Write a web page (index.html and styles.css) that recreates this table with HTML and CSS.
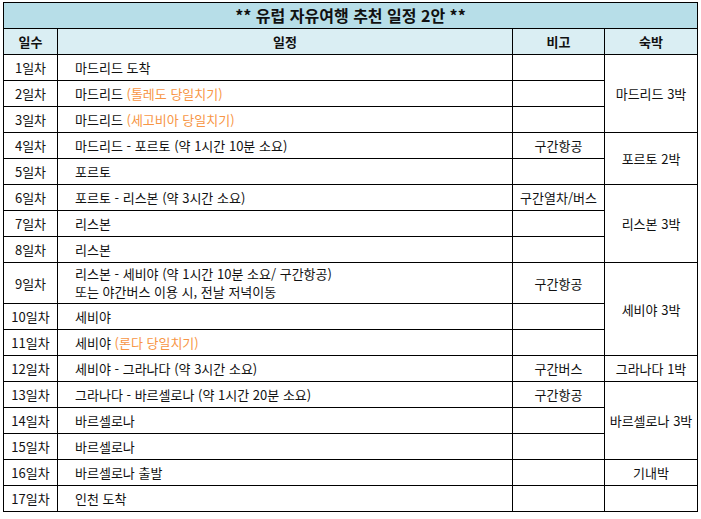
FILE: index.html
```html
<!DOCTYPE html>
<html lang="ko">
<head>
<meta charset="utf-8">
<link rel="stylesheet" href="styles.css">
</head>
<body>
<table class="plan">
  <colgroup>
    <col class="c-day">
    <col class="c-plan">
    <col class="c-note">
    <col class="c-stay">
  </colgroup>
  <tr class="r-title"><td colspan="4" class="title">** 유럽 자유여행 추천 일정 2안 **</td></tr>
  <tr class="r-head">
    <th>일수</th><th>일정</th><th>비고</th><th>숙박</th>
  </tr>
  <tr><td class="day">1일차</td><td class="sch">마드리드 도착</td><td class="note"></td><td class="stay" rowspan="3">마드리드 3박</td></tr>
  <tr><td class="day">2일차</td><td class="sch">마드리드 <span class="opt">(톨레도 당일치기)</span></td><td class="note"></td></tr>
  <tr><td class="day">3일차</td><td class="sch">마드리드 <span class="opt">(세고비아 당일치기)</span></td><td class="note"></td></tr>
  <tr><td class="day">4일차</td><td class="sch">마드리드 - 포르토 (약 1시간 10분 소요)</td><td class="note">구간항공</td><td class="stay" rowspan="2">포르토 2박</td></tr>
  <tr><td class="day">5일차</td><td class="sch">포르토</td><td class="note"></td></tr>
  <tr><td class="day">6일차</td><td class="sch">포르토 - 리스본 (약 3시간 소요)</td><td class="note">구간열차/버스</td><td class="stay" rowspan="3">리스본 3박</td></tr>
  <tr><td class="day">7일차</td><td class="sch">리스본</td><td class="note"></td></tr>
  <tr><td class="day">8일차</td><td class="sch">리스본</td><td class="note"></td></tr>
  <tr class="r-double"><td class="day">9일차</td><td class="sch"><div class="ln">리스본 - 세비야 (약 1시간 10분 소요/ 구간항공)</div><div class="ln">또는 야간버스 이용 시, 전날 저녁이동</div></td><td class="note">구간항공</td><td class="stay" rowspan="3">세비야 3박</td></tr>
  <tr><td class="day">10일차</td><td class="sch">세비야</td><td class="note"></td></tr>
  <tr><td class="day">11일차</td><td class="sch">세비야 <span class="opt">(론다 당일치기)</span></td><td class="note"></td></tr>
  <tr><td class="day">12일차</td><td class="sch">세비야 - 그라나다 (약 3시간 소요)</td><td class="note">구간버스</td><td class="stay">그라나다 1박</td></tr>
  <tr><td class="day">13일차</td><td class="sch">그라나다 - 바르셀로나 (약 1시간 20분 소요)</td><td class="note">구간항공</td><td class="stay" rowspan="3">바르셀로나 3박</td></tr>
  <tr><td class="day">14일차</td><td class="sch">바르셀로나</td><td class="note"></td></tr>
  <tr><td class="day">15일차</td><td class="sch">바르셀로나</td><td class="note"></td></tr>
  <tr><td class="day">16일차</td><td class="sch">바르셀로나 출발</td><td class="note"></td><td class="stay">기내박</td></tr>
  <tr><td class="day">17일차</td><td class="sch">인천 도착</td><td class="note"></td><td class="stay"></td></tr>
</table>
</body>
</html>
```
FILE: styles.css
```css
html, body {
  margin: 0;
  padding: 0;
  background: #ffffff;
}
body {
  padding: 2px 0 0 3px;
  font-family: "Noto Sans CJK KR", "Noto Sans", sans-serif;
  font-size: 13px;
  color: #111;
}
.plan {
  border-collapse: collapse;
  table-layout: fixed;
  width: 694px;
  border: 1.5px solid #000;
}
.c-day { width: 54px; }
.c-plan { width: 455px; }
.c-note { width: 92px; }
.c-stay { width: 93px; }
.plan td, .plan th {
  border: 1.5px solid #000;
  padding: 0;
  line-height: 17px;
  vertical-align: middle;
}
.plan tr { height: 26px; }
.plan tr.r-double { height: 41px; }
.ln { height: 18px; line-height: 18px; }
.r-title td {
  background: #b7dee8;
  text-align: center;
  font-weight: bold;
  font-size: 16px;
}
.r-head th {
  background: #daeef3;
  text-align: center;
  font-weight: bold;
  font-size: 13px;
}
.day { text-align: center; }
.sch { padding-left: 17px !important; text-align: left; }
.note, .stay { text-align: center; }
.opt { color: #f79646; }
```
